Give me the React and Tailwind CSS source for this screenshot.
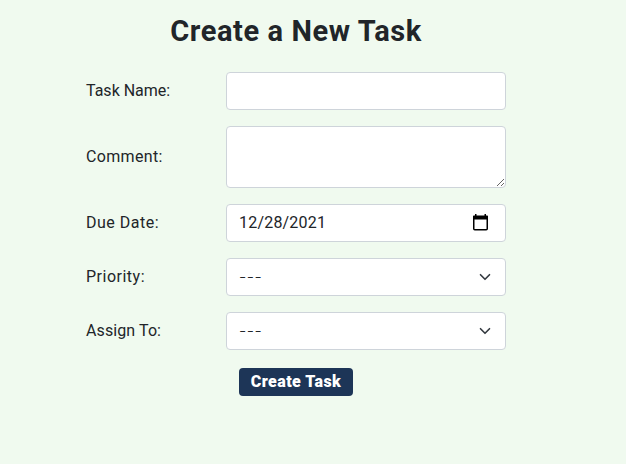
const fieldBox =
  'w-[280px] rounded-[4px] border border-[#ced4da] bg-white text-[#212529]';

function Row({ label, tracking, children }) {
  return (
    <div className="flex items-center">
      <label className={`w-[140px] shrink-0 whitespace-nowrap ${tracking}`}>{label}</label>
      {children}
    </div>
  );
}

function CalendarIcon() {
  return (
    <svg className="mb-0.5 mr-1 h-[17px] w-[17px]" viewBox="0 0 17 17" fill="none">
      <path d="M1.75 3V14.75Q1.75 15.75 2.75 15.75H14.25Q15.25 15.75 15.25 14.75V3" stroke="#000" strokeWidth="1.5" />
      <path d="M1 2.2Q1 1.5 1.8 1.5H3V0H4.5V1.5H12.5V0H14V1.5H15.2Q16 1.5 16 2.2V5.5H1Z" fill="#000" />
    </svg>
  );
}

function SelectBox() {
  return (
    <div className={`${fieldBox} flex h-[38px] items-center justify-between pl-3 pr-[14px]`}>
      <span className="pb-0.5 font-['Inter','Liberation_Sans',sans-serif] text-base font-light tracking-[0.5px]">---</span>
      <svg className="h-3 w-3" viewBox="0 0 16 16" fill="none" stroke="#343a40" strokeWidth="2.2" strokeLinecap="round" strokeLinejoin="round">
        <path d="m2 5 6 6 6-6" />
      </svg>
    </div>
  );
}

export default function App() {
  return (
    <main className="h-[464px] w-full overflow-hidden bg-[#f0faef] font-['Roboto','Liberation_Sans',sans-serif] text-base text-[#212529]">
      <form className="ml-[86px] w-[420px] pt-[14px]">
        <h1 className="mb-6 whitespace-nowrap text-center text-[29px] font-bold leading-[34px] tracking-[0.6px]">
          Create a New Task
        </h1>
        <div className="flex flex-col gap-4">
          <Row label="Task Name:" tracking="tracking-normal">
            <input className={`${fieldBox} h-[38px] px-3`} />
          </Row>
          <Row label="Comment:" tracking="tracking-[0.35px]">
            <textarea className={`${fieldBox} block h-[62px] resize px-3 py-1.5`} />
          </Row>
          <Row label="Due Date:" tracking="tracking-[0.5px]">
            <div className={`${fieldBox} flex h-[38px] items-center justify-between px-3`}>
              <span className="tracking-[0.2px]">12/28/2021</span>
              <CalendarIcon />
            </div>
          </Row>
          <Row label="Priority:" tracking="tracking-[0.5px]">
            <SelectBox />
          </Row>
          <Row label="Assign To:" tracking="tracking-[0.1px]">
            <SelectBox />
          </Row>
        </div>
        <button
          type="button"
          className="ml-[153px] mt-[18px] flex h-7 w-[114px] items-center justify-center whitespace-nowrap rounded-[4px] bg-[#1d3557] text-base font-black tracking-[0.45px] text-white"
        >
          Create Task
        </button>
      </form>
    </main>
  );
}
